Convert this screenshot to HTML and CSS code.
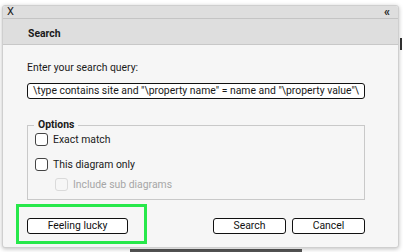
FILE: index.html
```html
<!DOCTYPE html>
<html>
<head>
<meta charset="utf-8">
<link rel="stylesheet" href="styles.css">
</head>
<body>
<div class="page">
  <div class="dialog">
    <div class="topbar"><span class="close">X</span><span class="collapse">«</span></div>
    <div class="titlebar">Search</div>
    <div class="content">
      <div class="label">Enter your search query:</div>
      <div class="query">\type contains site and "\property name" = name and "\property value"\</div>
      <fieldset class="options">
        <legend>Options</legend>
        <label class="check"><span class="box"></span>Exact match</label>
        <label class="check"><span class="box"></span>This diagram only</label>
        <label class="check sub disabled"><span class="box"></span>Include sub diagrams</label>
      </fieldset>
      <div class="buttons">
        <button class="btn lucky">Feeling lucky</button>
        <div class="spacer"></div>
        <button class="btn">Search</button>
        <button class="btn">Cancel</button>
      </div>
    </div>
    <div class="highlight"></div>
  </div>
  <div class="under-right"></div>
  <div class="under-bottom"></div>
</div>
</body>
</html>
```
FILE: styles.css
```css
html, body {
  margin: 0;
  padding: 0;
  background: #ffffff;
}
body {
  font-family: Roboto, "Liberation Sans", sans-serif;
  font-size: 10.4px;
  color: #1a1a1a;
  width: 403px;
  height: 252px;
  overflow: hidden;
}
.page {
  position: relative;
  width: 403px;
  height: 252px;
  padding-top: 5px;
  box-sizing: border-box;
}
.dialog {
  position: relative;
  z-index: 1;
  margin-left: 2px;
  width: 397px;
  height: 243px;
  box-sizing: border-box;
  background: #f6f6f6;
  border: 1px solid #cfcfcf;
  border-radius: 3px;
  box-shadow: 0 1px 4px rgba(0,0,0,0.25);
  overflow: hidden;
}
.topbar {
  height: 12px;
  background: #dedede;
  border-bottom: 1px solid #c4c4c4;
  display: flex;
  justify-content: space-between;
  align-items: center;
  padding: 0 9px 0 4px;
  line-height: 12px;
  color: #222;
}
.close {
  font-size: 11px;
}
.collapse {
  font-size: 12px;
  font-weight: bold;
  letter-spacing: -1px;
}
.titlebar {
  height: 25px;
  background: #dedede;
  border-bottom: 1px solid #c8c8c8;
  padding-left: 25px;
  line-height: 30px;
  overflow: hidden;
  font-weight: bold;
  font-size: 10.4px;
  color: #1a1a1a;
}
.content {
  padding: 16px 33px 0 24px;
}
.label {
  line-height: 14px;
  height: 14px;
}
.query {
  margin-top: 8px;
  height: 16px;
  box-sizing: border-box;
  border: 1px solid #111;
  border-radius: 3px;
  background: #fff;
  padding: 0 0 0 5px;
  line-height: 14px;
  white-space: nowrap;
  overflow: hidden;
}
.options {
  margin: 20px 0 0 0;
  padding: 0 0 8px 7px;
  border: 1px solid #c9c9c9;
  min-width: 0;
}
.options legend {
  padding: 0 4px;
  margin-left: -1px;
  font-weight: bold;
  height: 12px;
  line-height: 12px;
}
.check {
  display: flex;
  align-items: center;
  height: 13px;
  line-height: 13px;
  margin-top: 2px;
}
.check + .check {
  margin-top: 12px;
}
.check.sub {
  margin-top: 7px;
  padding-left: 20px;
}
.box {
  width: 13px;
  height: 13px;
  box-sizing: border-box;
  border: 1px solid #444;
  border-radius: 3px;
  background: #fff;
  margin-right: 5px;
  flex: none;
}
.disabled {
  color: #a6a6a6;
}
.disabled .box {
  border-color: #dadada;
  background: #f6f6f6;
}
.buttons {
  display: flex;
  margin-top: 18px;
}
.spacer {
  flex: 1;
}
.btn {
  font-family: Roboto, "Liberation Sans", sans-serif;
  font-size: 10.4px;
  height: 16px;
  width: 73px;
  padding: 0;
  margin: 0 0 0 6px;
  border: 1px solid #111;
  border-radius: 3px;
  background: #fff;
  color: #111;
  line-height: 14px;
}
.btn.lucky {
  width: 101px;
  margin-left: 0;
}
.highlight {
  position: absolute;
  left: 13px;
  top: 198px;
  width: 131px;
  height: 40px;
  box-sizing: border-box;
  border: 3px solid #27e84a;
}
.under-right {
  position: absolute;
  right: 0;
  top: 38px;
  width: 3px;
  height: 12px;
  border-left: 2px solid #333;
  box-sizing: border-box;
}
.under-bottom {
  position: absolute;
  left: 130px;
  bottom: 0;
  width: 172px;
  height: 3px;
  background: #555;
}
```
